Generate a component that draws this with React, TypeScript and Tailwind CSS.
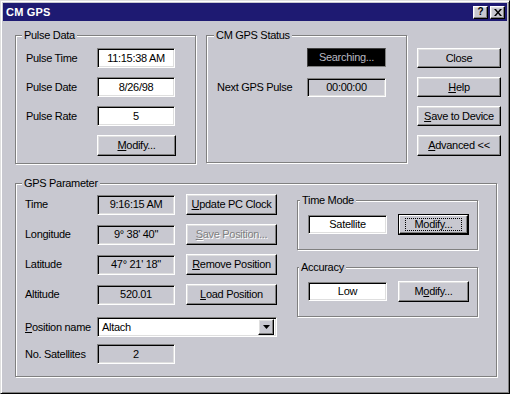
const GRAY = "bg-[#c8c8d0]";

function Group({
  title,
  titleClass,
  className,
  children,
}: {
  title: string;
  titleClass: string;
  className: string;
  children?: React.ReactNode;
}) {
  return (
    <div
      className={`relative border border-[#808080] shadow-[inset_1px_1px_0_#fff,1px_1px_0_#fff] ${className}`}
    >
      <span className={`absolute -top-[8px] px-[2px] leading-[14px] ${GRAY} ${titleClass}`}>{title}</span>
      {children}
    </div>
  );
}

function Field({
  children,
  white,
  className,
}: {
  children?: React.ReactNode;
  white?: boolean;
  className: string;
}) {
  return (
    <div
      className={`flex items-center justify-center border border-t-[#808080] border-l-[#808080] border-b-white border-r-white shadow-[inset_1px_1px_0_#000,inset_-1px_-1px_0_#dfdfdf] ${
        white ? "bg-white" : GRAY
      } ${className}`}
    >
      {children}
    </div>
  );
}

function Btn({
  children,
  className,
  disabled,
}: {
  children: React.ReactNode;
  className: string;
  disabled?: boolean;
}) {
  return (
    <div
      className={`flex items-center justify-center border border-t-white border-l-white border-b-black border-r-black shadow-[inset_-1px_-1px_0_#808080,inset_1px_1px_0_#dfdfdf] ${
        disabled ? "text-[#808080] [text-shadow:1px_1px_0_#fff]" : ""
      } ${className}`}
    >
      {children}
    </div>
  );
}

function FocusBtn({ children, className }: { children: React.ReactNode; className: string }) {
  return (
    <div className={`flex border border-black ${className}`}>
      <div className="flex flex-1 items-center justify-center border border-t-white border-l-white border-b-black border-r-black shadow-[inset_-1px_-1px_0_#808080]">
        <span className="border border-dotted border-black px-[8px] leading-[11px]">{children}</span>
      </div>
    </div>
  );
}

function U({ children }: { children: React.ReactNode }) {
  return <span className="underline underline-offset-[1px]">{children}</span>;
}

export default function App() {
  return (
    <div className="w-[522px] h-[409px] bg-white font-['Liberation_Sans',Arial,sans-serif] text-[11px] tracking-[-0.3px] text-black">
      <div
        className={`flex flex-col w-[510px] h-[394px] p-[2px] ${GRAY} border border-t-[#dfdfdf] border-l-[#dfdfdf] border-b-black border-r-black shadow-[inset_1px_1px_0_#fff,inset_-1px_-1px_0_#808080]`}
      >
        {/* title bar */}
        <div className="flex h-[18px] items-center justify-between bg-[#1e1a72] pl-[3px] pr-[2px]">
          <span className="font-bold text-white tracking-[0.2px]">CM GPS</span>
          <div className="flex gap-[2px]">
            <Btn className={`w-[15px] h-[13px] ${GRAY} text-[10px] font-bold leading-none`}>?</Btn>
            <Btn className={`w-[15px] h-[13px] ${GRAY}`}>
              <svg width="8" height="7" viewBox="0 0 8 7">
                <path d="M0 0h2l2 2.5L6 0h2L5 3.5 8 7H6L4 4.5 2 7H0l3-3.5z" fill="#000" />
              </svg>
            </Btn>
          </div>
        </div>

        <div className="flex flex-col pl-[12px]">
          {/* top row */}
          <div className="mt-[14px] flex items-start">
            <Group title="Pulse Data" titleClass="left-[6px]" className="w-[181px] h-[129px] pt-[12px] pl-[10px]">
              <div className="flex flex-col gap-[9px]">
                <div className="flex items-center">
                  <span className="w-[71px]">Pulse Time</span>
                  <Field white className="w-[78px] h-[20px]">11:15:38 AM</Field>
                </div>
                <div className="flex items-center">
                  <span className="w-[71px]">Pulse Date</span>
                  <Field white className="w-[78px] h-[20px]">8/26/98</Field>
                </div>
                <div className="flex items-center">
                  <span className="w-[71px]">Pulse Rate</span>
                  <Field white className="w-[78px] h-[20px]">5</Field>
                </div>
                <Btn className="ml-[71px] w-[79px] h-[21px]">
                  <span>
                    <U>M</U>odify...
                  </span>
                </Btn>
              </div>
            </Group>

            <Group title="CM GPS Status" titleClass="left-[7px]" className="ml-[10px] w-[201px] h-[128px] pt-[12px] pl-[10px]">
              <div className="ml-[90px] flex h-[19px] w-[79px] items-center justify-center border border-t-[#404040] border-l-[#404040] border-b-[#808080] border-r-[#808080] bg-black text-[#b8b8c0]">
                Searching...
              </div>
              <div className="mt-[11px] flex items-center">
                <span className="w-[90px]">Next GPS Pulse</span>
                <Field className="w-[79px] h-[19px]">00:00:00</Field>
              </div>
            </Group>

            <div className="ml-[10px] mt-[13px] flex w-[84px] flex-col gap-[9px]">
              <Btn className="h-[20px]">Close</Btn>
              <Btn className="h-[20px]">
                <span>
                  <U>H</U>elp
                </span>
              </Btn>
              <Btn className="h-[20px]">
                <span>
                  <U>S</U>ave to Device
                </span>
              </Btn>
              <Btn className="h-[21px]">
                <span>
                  <U>A</U>dvanced &lt;&lt;
                </span>
              </Btn>
            </div>
          </div>

          {/* GPS parameter */}
          <Group title="GPS Parameter" titleClass="left-[6px]" className="mt-[19px] flex w-[482px] h-[194px]">
            <div className="flex flex-col pl-[9px] pt-[10px]">
              <div className="flex flex-col gap-[9px]">
                <div className="flex items-center">
                  <span className="w-[72px]">Time</span>
                  <Field className="w-[78px] h-[20px]">9:16:15 AM</Field>
                  <Btn className="ml-[11px] w-[91px] h-[21px]">
                    <span>
                      <U>U</U>pdate PC Clock
                    </span>
                  </Btn>
                </div>
                <div className="flex items-center">
                  <span className="w-[72px]">Longitude</span>
                  <Field className="w-[78px] h-[20px]">9° 38' 40"</Field>
                  <Btn disabled className="ml-[11px] w-[91px] h-[21px]">
                    <span>
                      <U>S</U>ave Position...
                    </span>
                  </Btn>
                </div>
                <div className="flex items-center">
                  <span className="w-[72px]">Latitude</span>
                  <Field className="w-[78px] h-[20px]">47° 21' 18"</Field>
                  <Btn className="ml-[11px] w-[91px] h-[21px]">
                    <span>
                      <U>R</U>emove Position
                    </span>
                  </Btn>
                </div>
                <div className="flex items-center">
                  <span className="w-[72px]">Altitude</span>
                  <Field className="w-[78px] h-[20px]">520.01</Field>
                  <Btn className="ml-[11px] w-[91px] h-[21px]">
                    <span>
                      <U>L</U>oad Position
                    </span>
                  </Btn>
                </div>
              </div>
              <div className="mt-[12px] flex items-center">
                <span className="w-[72px]">
                  <U>P</U>osition name
                </span>
                <div className="flex h-[20px] w-[180px] items-center border border-t-[#808080] border-l-[#808080] border-b-white border-r-white bg-white shadow-[inset_1px_1px_0_#000,inset_-1px_-1px_0_#dfdfdf] p-[2px]">
                  <span className="flex-1 pl-[2px]">Altach</span>
                  <Btn className={`w-[16px] h-[16px] ${GRAY}`}>
                    <svg width="7" height="4" viewBox="0 0 7 4">
                      <path d="M0 0h7L3.5 4z" fill="#000" />
                    </svg>
                  </Btn>
                </div>
              </div>
              <div className="mt-[7px] flex items-center">
                <span className="w-[72px]">No. Satellites</span>
                <Field className="w-[78px] h-[20px]">2</Field>
              </div>
            </div>

            <div className="ml-[20px] mt-[16px] flex flex-col">
              <Group title="Time Mode" titleClass="left-[2px]" className="w-[181px] h-[50px] pt-[13px] pl-[10px]">
                <div className="flex items-center">
                  <Field white className="w-[79px] h-[19px]">Satellite</Field>
                  <FocusBtn className="ml-[11px] w-[71px] h-[21px]">Modify...</FocusBtn>
                </div>
              </Group>
              <Group title="Accuracy" titleClass="left-[1px]" className="mt-[17px] w-[181px] h-[50px] pt-[13px] pl-[10px]">
                <div className="flex items-center">
                  <Field white className="w-[79px] h-[19px]">Low</Field>
                  <Btn className="ml-[11px] w-[71px] h-[21px]">
                    <span>
                      M<U>o</U>dify...
                    </span>
                  </Btn>
                </div>
              </Group>
            </div>
          </Group>
        </div>
      </div>
    </div>
  );
}
